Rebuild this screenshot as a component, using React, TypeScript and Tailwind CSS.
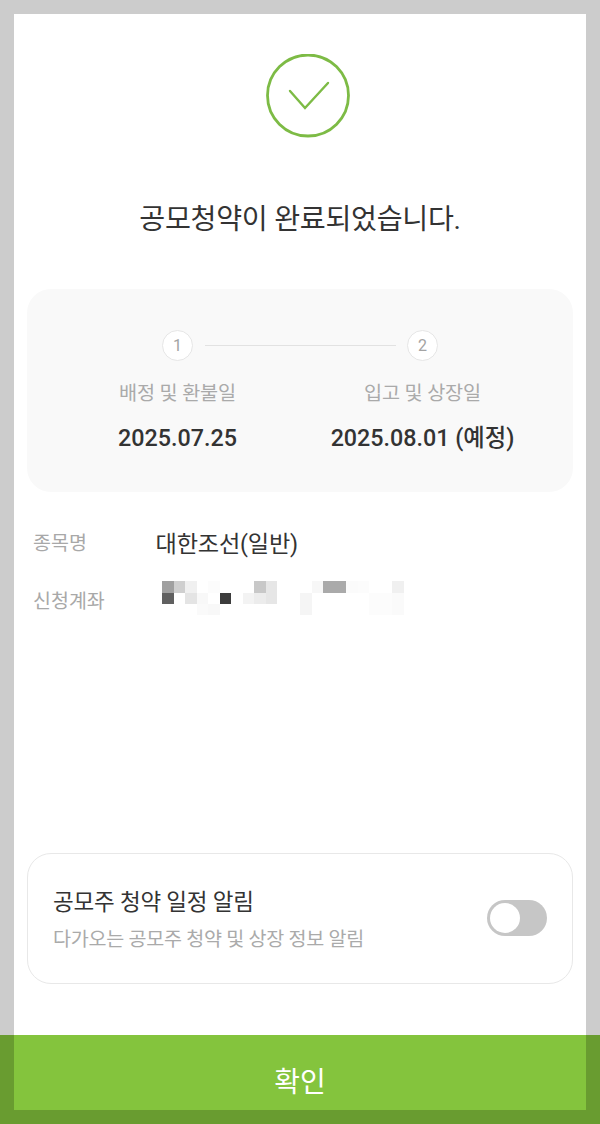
const KR = "font-['Roboto','Noto_Sans_CJK_KR',sans-serif]";

const mosaic: [number, number, string][] = [
  [0, 0, "#a0a0a0"], [1, 0, "#cfcfcf"], [2, 0, "#f0f0f0"], [4, 0, "#fcfcfc"],
  [8, 0, "#c8c8c8"], [9, 0, "#e6e6e6"], [13, 0, "#f7f7f7"], [14, 0, "#aaaaaa"],
  [15, 0, "#aaaaaa"], [16, 0, "#fbfbfb"], [17, 0, "#fcfcfc"], [20, 0, "#f0f0f0"],
  [0, 1, "#606060"], [2, 1, "#e4e4e4"], [3, 1, "#f8f8f8"], [5, 1, "#3c3c3c"],
  [7, 1, "#f3f3f3"], [8, 1, "#ececec"], [9, 1, "#e6e6e6"], [12, 1, "#f5f5f5"],
  [18, 1, "#fcfcfc"], [19, 1, "#fcfcfc"], [20, 1, "#fafafa"],
  [3, 2, "#fafafa"], [4, 2, "#f8f8f8"], [12, 2, "#f5f5f5"], [18, 2, "#fcfcfc"],
  [19, 2, "#fcfcfc"], [20, 2, "#fafafa"],
];

function Step({ n, label, date }: { n: number; label: string; date: string }) {
  return (
    <div className="flex flex-col items-center">
      <div className="relative z-10 flex h-[31px] w-[31px] items-center justify-center rounded-full border border-[#e6e6e6] bg-white text-[16px] leading-none text-[#a3a3a3]">
        {n}
      </div>
      <div className="mt-[20px] text-[19.7px] leading-[26px] tracking-[-0.2px] text-[#aaaaaa]">{label}</div>
      <div className="mt-[17px] text-[23.3px] leading-[28px] font-medium text-[#333333]">{date}</div>
    </div>
  );
}

export default function App() {
  return (
    <div className={`relative flex h-[1124px] w-[600px] flex-col overflow-hidden bg-white ${KR}`}>
      <div className="flex flex-1 flex-col px-[27px]">
        <div className="mt-[54px] flex justify-center pl-[16px]">
          <svg width="84" height="84" viewBox="0 0 84 84" fill="none" className="block">
            <circle cx="42" cy="41.5" r="40.5" stroke="#7dbb45" strokeWidth="2.8" />
            <path d="M24 37 L39 54 L62 29" stroke="#7dbb45" strokeWidth="2.4" strokeLinecap="round" strokeLinejoin="miter" />
          </svg>
        </div>
        <h1 className="mt-[64px] text-center text-[28.2px] leading-[36px] font-normal tracking-[-0.3px] text-[#333333]">
          공모청약이 완료되었습니다.
        </h1>

        <div className="relative mt-[51px] h-[203px] rounded-[24px] bg-[#f9f9f9] px-[28px] pt-[41px]">
          <div className="relative grid grid-cols-2">
            <div className="absolute top-[15px] left-[150px] h-px w-[191px] bg-[#e2e2e2]" />
            <Step n={1} label="배정 및 환불일" date="2025.07.25" />
            <Step n={2} label="입고 및 상장일" date="2025.08.01 (예정)" />
          </div>
        </div>

        <div className="mt-[38px] flex items-center pl-[6px]">
          <div className="w-[122.5px] text-[19.5px] leading-[28px] text-[#a8a8a8]">종목명</div>
          <div className="text-[23.2px] leading-[28px] tracking-[-0.2px] text-[#333333]">대한조선(일반)</div>
        </div>
        <div className="mt-[30px] flex items-center pl-[6px]">
          <div className="w-[129px] text-[19.5px] leading-[28px] text-[#a8a8a8]">신청계좌</div>
          <svg width="254" height="34" viewBox="0 0 254 34" className="-mt-[9px] block" shapeRendering="crispEdges">
            {mosaic.map(([c, r, fill]) => (
              <rect key={`${c}-${r}`} x={c * 11.5} y={r * 11.5} width="11.5" height="11.5" fill={fill} />
            ))}
          </svg>
        </div>

        <div className="mt-auto mb-[51px] flex h-[131px] items-center justify-between rounded-[24px] border border-[#e8e8e8] pr-[25px] pl-[25px]">
          <div className="pt-[2px]">
            <div className="text-[22.5px] leading-[30px] tracking-[-0.2px] text-[#333333]">공모주 청약 일정 알림</div>
            <div className="mt-[10px] text-[19.6px] leading-[26px] tracking-[-0.3px] text-[#aaaaaa]">다가오는 공모주 청약 및 상장 정보 알림</div>
          </div>
          <div className="mb-[2px] flex h-[36px] w-[60px] items-center rounded-full bg-[#c6c6c6] pl-[3px]">
            <div className="h-[30px] w-[30px] rounded-full bg-white" />
          </div>
        </div>
      </div>

      <button className="flex h-[89px] w-full shrink-0 items-center justify-center bg-[#84c43d] pt-[6px] text-[28px] leading-none text-white">
        확인
      </button>

      <div className="pointer-events-none absolute inset-0 border-[14px] border-black/20" />
    </div>
  );
}
